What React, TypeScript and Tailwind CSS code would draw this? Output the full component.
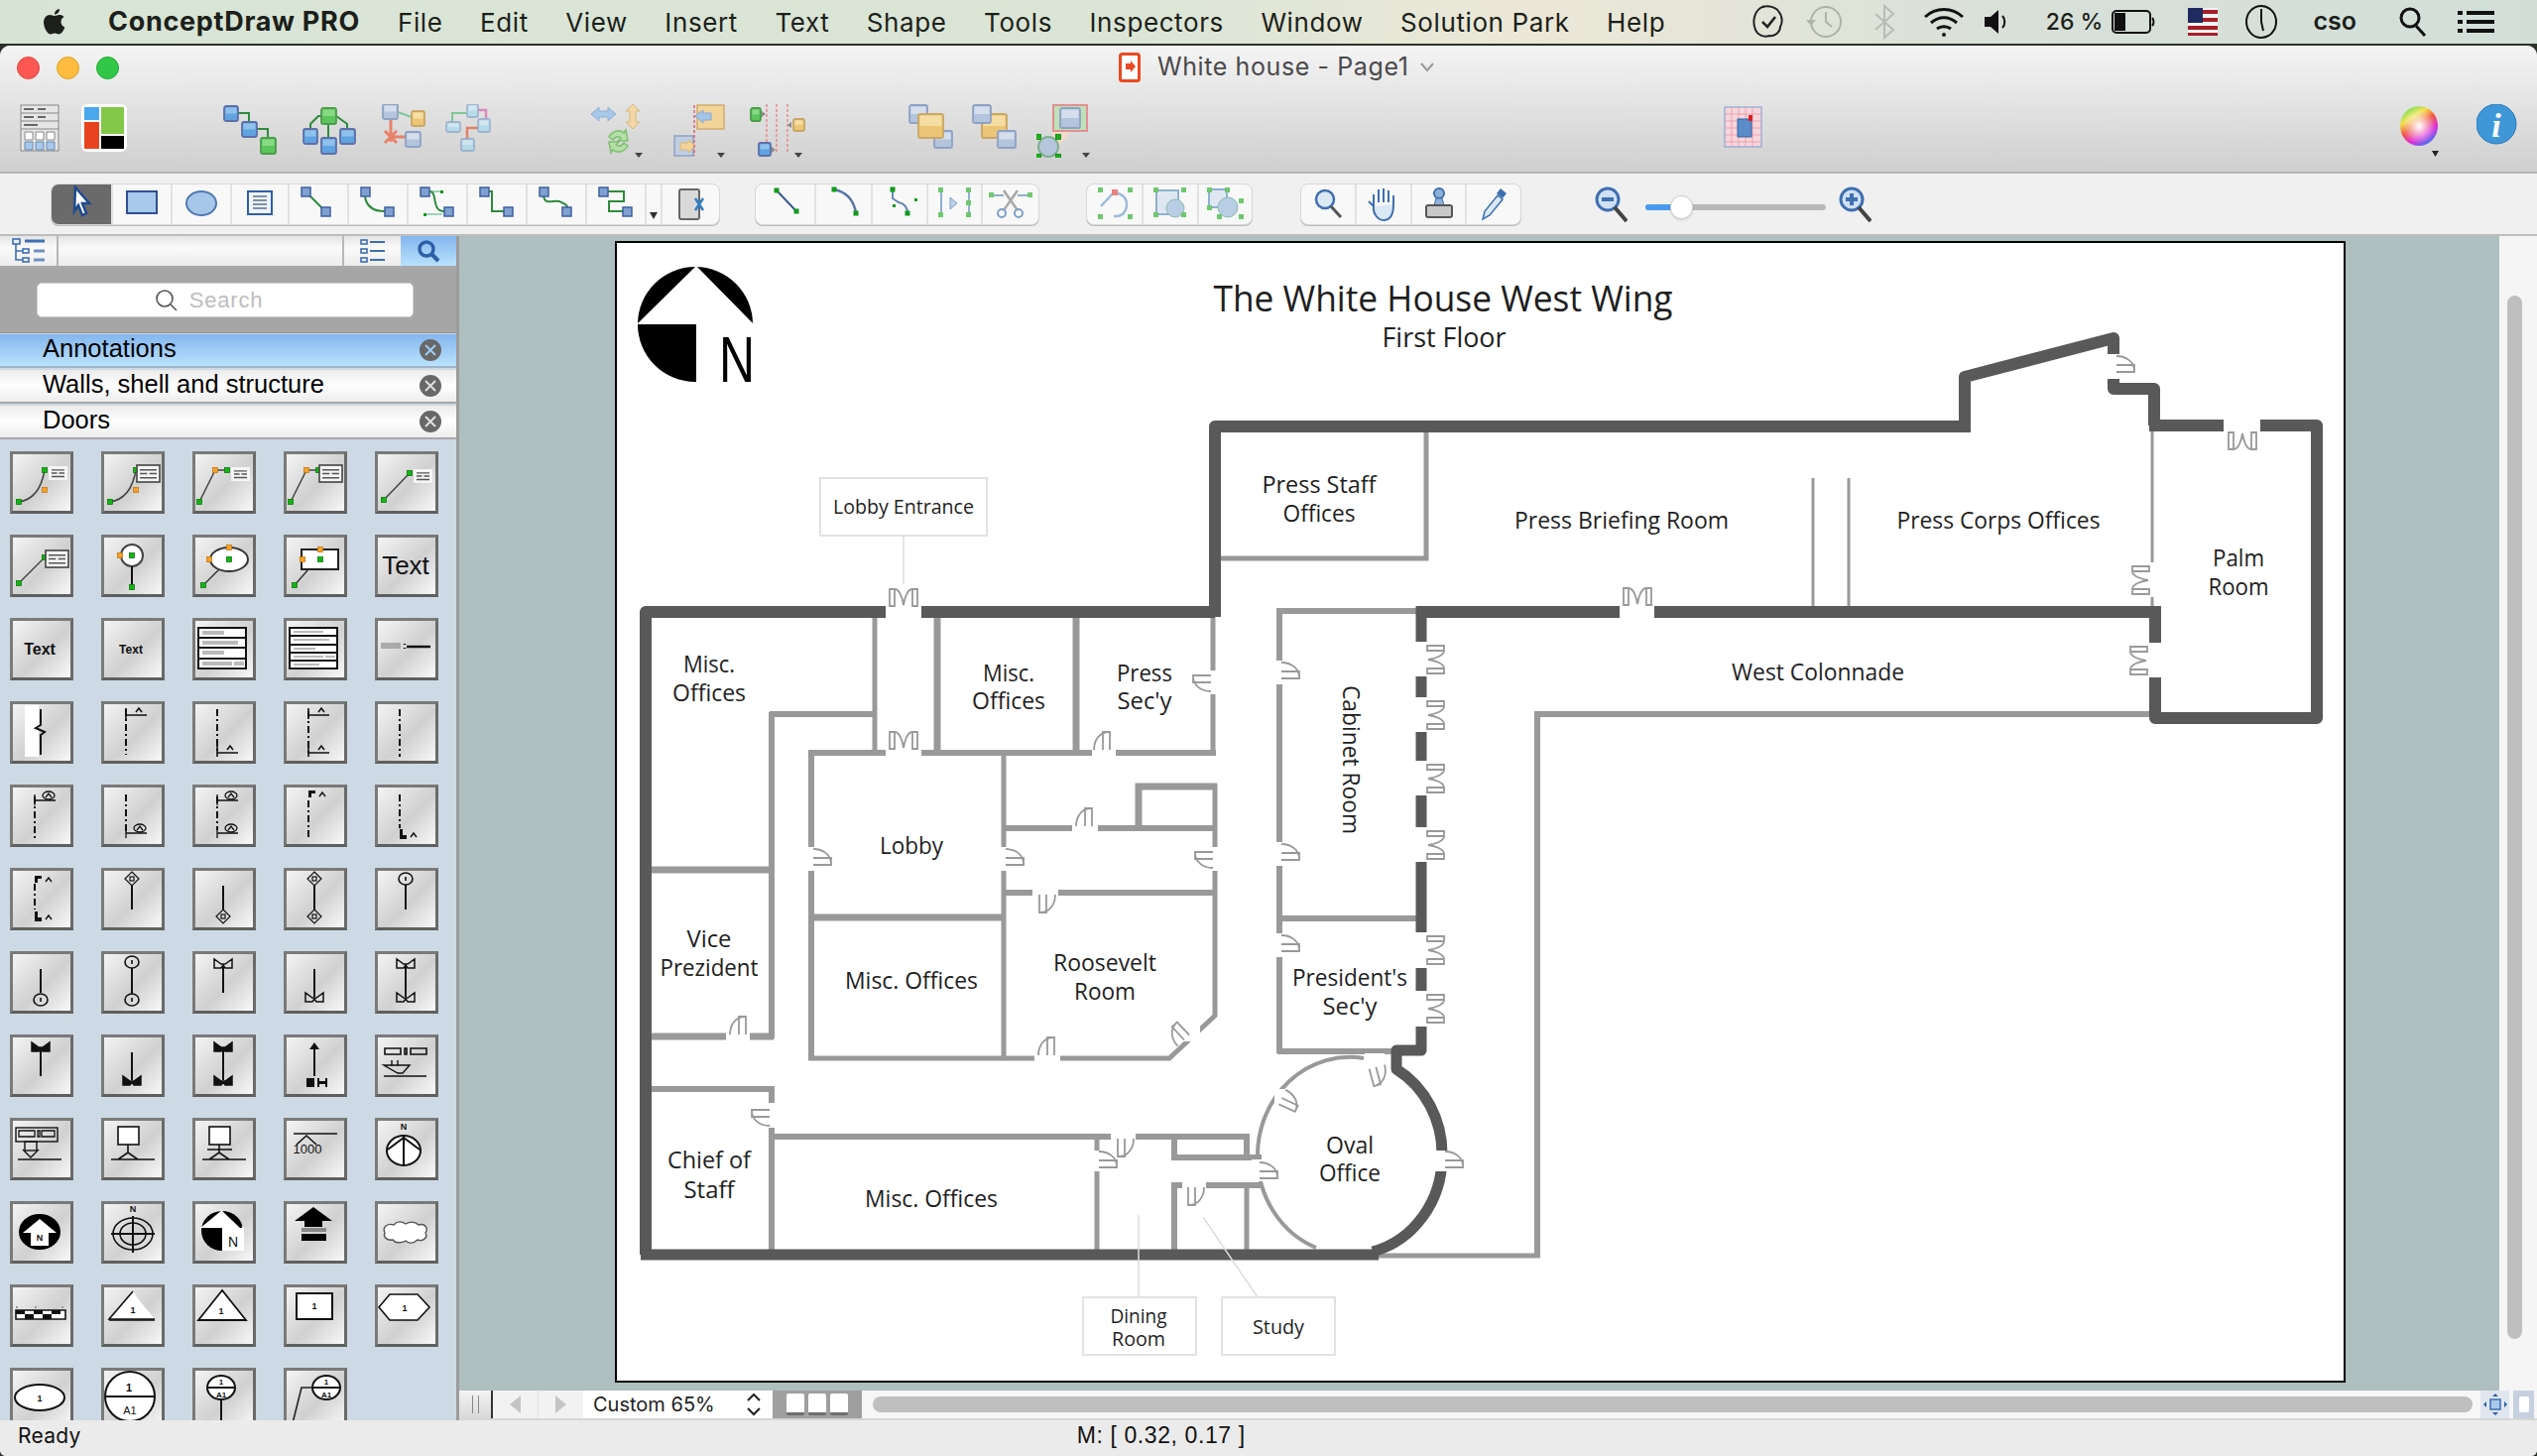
import React from "react";

const LB = "#999999";
const DK = "#595959";

function G({ x, y }: { x: number; y: number }) {
  return <rect x={x - 2.5} y={y - 2.5} width={5} height={5} fill="#16b316" stroke="#0b7d0b" strokeWidth={0.8} />;
}
function O({ x, y }: { x: number; y: number }) {
  return <rect x={x - 2.5} y={y - 2.5} width={5} height={5} fill="#f4a12a" stroke="#c77a10" strokeWidth={0.8} />;
}
function TL({ x, y, w, h, box }: { x: number; y: number; w: number; h: number; box?: boolean }) {
  return (
    <g>
      <rect x={x} y={y} width={w} height={h} fill="#f5f5f5" stroke={box ? "#444" : "none"} strokeWidth={box ? 1.6 : 0} />
      <path d={`M${x + 3} ${y + h * 0.28}H${x + w - 3}M${x + 3} ${y + h * 0.5}H${x + w * 0.45}M${x + w * 0.55} ${y + h * 0.5}H${x + w - 3}M${x + 3} ${y + h * 0.75}H${x + w - 3}`} stroke="#555" strokeWidth={1.4} />
    </g>
  );
}
const DashV = ({ x, y1, y2 }: { x: number; y1: number; y2: number }) => <path d={`M${x} ${y1}V${y2}`} stroke="#111" strokeWidth={2} strokeDasharray="7 3 2 3" fill="none" />;
const TickT = ({ x, y }: { x: number; y: number }) => (
  <g stroke="#111" strokeWidth={1.6} fill="none">
    <path d={`M${x} ${y - 7}V${y + 4}M${x} ${y}H${x + 21}`} />
    <path d={`M${x + 10} ${y - 3}l3 -4l3 4`} />
  </g>
);
const Circ = ({ x, y }: { x: number; y: number }) => (
  <g stroke="#111" strokeWidth={1.3} fill="none">
    <path d={`M${x} ${y - 6}V${y + 5}M${x} ${y}H${x + 21}`} />
    <ellipse cx={x + 14} cy={y - 5} rx={6} ry={4} />
    <path d={`M${x + 11} ${y - 3}l3 -4l3 4`} />
  </g>
);
const FL = ({ x, y }: { x: number; y: number }) => (
  <g>
    <path d={`M${x} ${y}h7v3h-4v4h-3z`} fill="#111" />
    <path d={`M${x + 11} ${y + 6}l3 -4l3 4`} stroke="#111" strokeWidth={1.4} fill="none" />
  </g>
);
const Dm = ({ x, y }: { x: number; y: number }) => (
  <g stroke="#111" strokeWidth={1.2} fill="none">
    <path d={`M${x} ${y - 7}l7 7l-7 7l-7 -7z`} />
    <rect x={x - 2} y={y - 2} width={4} height={4} />
  </g>
);
const Ci = ({ x, y }: { x: number; y: number }) => (
  <g stroke="#111" strokeWidth={1.6} fill="none">
    <ellipse cx={x} cy={y} rx={7} ry={6} />
    <path d={`M${x} ${y - 2}v4`} />
  </g>
);
const Wg = ({ x, y, f }: { x: number; y: number; f?: boolean }) => (
  <path d={`M${x - 9} ${y - 5}v9h7l2 -3l2 3h7v-9l-7 5h-4z`} fill={f ? "#111" : "none"} stroke="#111" strokeWidth={1.5} />
);
const Ln = ({ d, w = 2 }: { d: string; w?: number }) => <path d={d} stroke="#111" strokeWidth={w} fill="none" />;
const Tx = ({ x, y, s, t, b }: { x: number; y: number; s: number; t: string; b?: boolean }) => (
  <text x={x} y={y} fontSize={s} fontWeight={b ? 700 : 400} textAnchor="middle" fill="#111" className="font-['Liberation_Sans',sans-serif]">{t}</text>
);

const lib: React.ReactNode[] = [
  <g><path d="M9 51Q30 48 35 19" stroke="#444" strokeWidth={1.5} fill="none" /><G x={9} y={51} /><G x={35} y={19} /><O x={35} y={39} /><TL x={39} y={15} w={19} h={14} /></g>,
  <g><path d="M9 51Q30 48 35 19" stroke="#444" strokeWidth={1.5} fill="none" /><G x={9} y={51} /><G x={35} y={19} /><O x={35} y={39} /><TL x={36} y={14} w={23} h={17} box /></g>,
  <g><path d="M7 51L23 19H35" stroke="#444" strokeWidth={1.5} fill="none" /><G x={7} y={51} /><O x={23} y={19} /><G x={35} y={19} /><TL x={39} y={16} w={19} h={14} /></g>,
  <g><path d="M7 51L23 19H35" stroke="#444" strokeWidth={1.5} fill="none" /><G x={7} y={51} /><O x={23} y={19} /><G x={35} y={19} /><TL x={36} y={14} w={23} h={17} box /></g>,
  <g><path d="M9 49L35 22" stroke="#444" strokeWidth={1.5} /><G x={9} y={49} /><G x={35} y={22} /><TL x={39} y={18} w={19} h={14} /></g>,
  <g><path d="M9 49L35 23" stroke="#444" strokeWidth={1.5} /><G x={9} y={49} /><G x={35} y={23} /><TL x={36} y={16} w={23} h={17} box /></g>,
  <g><circle cx={31} cy={21} r={11} fill="#fff" stroke="#444" strokeWidth={2} /><Ln d="M31 32V53" /><G x={31} y={21} /><G x={31} y={53} /><O x={19} y={21} /></g>,
  <g><ellipse cx={37} cy={25} rx={19} ry={12} fill="#fff" stroke="#333" strokeWidth={2} /><path d="M11 51L27 35" stroke="#333" strokeWidth={1.5} /><G x={37} y={25} /><O x={17} y={25} /><O x={37} y={13} /><G x={11} y={51} /></g>,
  <g><rect x={18} y={15} width={37} height={20} fill="#fff" stroke="#222" strokeWidth={2} /><path d="M11 51L25 35" stroke="#333" strokeWidth={1.5} /><G x={37} y={25} /><O x={19} y={25} /><O x={37} y={15} /><G x={11} y={51} /></g>,
  <Tx x={31} y={40} s={26} t="Text" />,
  <Tx x={30} y={37} s={16} t="Text" b />,
  <Tx x={30} y={36} s={12} t="Text" b />,
  <g><rect x={6} y={10} width={48} height={41} fill="#fff" stroke="#111" strokeWidth={2} /><Ln d="M6 20H54M6 30H54M6 41H54" /><path d="M10 13h22v4h-22zM10 23h36v4h-36zM10 33h22v4h-22zM10 44h30v4h-30zM42 44h10v4h-10z" fill="#bbb" /></g>,
  <g><rect x={6} y={10} width={48} height={41} fill="#fff" stroke="#111" strokeWidth={2} /><Ln d="M6 18H54M6 27H54M6 35H54M6 43H54" /><path d="M10 13h30v2h-30zM10 21h36v2h-36zM10 30h22v2h-22zM10 38h30v2h-30zM42 38h10v2h-10zM10 46h26v2h-26z" fill="#bbb" /></g>,
  <g><rect x={6} y={25} width={20} height={6} fill="#aaa" /><Ln d="M30 26v1M30 30v1M32 29H56" w={2.4} /></g>,
  <g><rect x={15} y={4} width={14} height={52} fill="#fff" /><Ln d="M31 8V24l-5 3l9 4l-4 3V54" /></g>,
  <g><DashV x={25} y1={8} y2={54} /><TickT x={25} y={14} /></g>,
  <g><DashV x={25} y1={8} y2={52} /><TickT x={25} y={52} /></g>,
  <g><DashV x={25} y1={10} y2={52} /><TickT x={25} y={14} /><TickT x={25} y={52} /></g>,
  <DashV x={25} y1={8} y2={56} />,
  <g><DashV x={25} y1={12} y2={54} /><Circ x={25} y={16} /></g>,
  <g><DashV x={25} y1={10} y2={48} /><Circ x={25} y={49} /></g>,
  <g><DashV x={25} y1={12} y2={46} /><Circ x={25} y={16} /><Circ x={25} y={49} /></g>,
  <g><DashV x={25} y1={16} y2={54} /><FL x={25} y={6} /></g>,
  <g><DashV x={25} y1={10} y2={44} /><path d="M25 45h3v6h4v4h-7z" fill="#111" /><path d="M36 53l3 -4l3 4" stroke="#111" strokeWidth={1.4} fill="none" /></g>,
  <g><DashV x={25} y1={16} y2={42} /><FL x={25} y={8} /><path d="M25 44h3v6h4v4h-7z" fill="#111" /><path d="M36 52l3 -4l3 4" stroke="#111" strokeWidth={1.4} fill="none" /></g>,
  <g><Dm x={31} y={11} /><Ln d="M31 18V42" /></g>,
  <g><Ln d="M31 18V42" /><Dm x={31} y={49} /></g>,
  <g><Dm x={31} y={11} /><Ln d="M31 18V42" /><Dm x={31} y={49} /></g>,
  <g><Ci x={31} y={11} /><Ln d="M31 17V42" /></g>,
  <g><Ln d="M31 18V42" /><Ci x={31} y={49} /></g>,
  <g><Ci x={31} y={11} /><Ln d="M31 17V43" /><Ci x={31} y={49} /></g>,
  <g><Wg x={31} y={13} /><Ln d="M31 14V42" /></g>,
  <g><Ln d="M31 18V46" /><Wg x={31} y={47} /></g>,
  <g><Wg x={31} y={13} /><Ln d="M31 14V46" /><Wg x={31} y={47} /></g>,
  <g><Wg x={31} y={13} f /><Ln d="M31 14V42" /></g>,
  <g><Ln d="M31 18V46" /><Wg x={31} y={47} f /></g>,
  <g><Wg x={31} y={13} f /><Ln d="M31 14V46" /><Wg x={31} y={47} f /></g>,
  <g><path d="M31 8l5 7h-10z" fill="#111" /><Ln d="M31 14V42" /><path d="M23 44h8v9h-8zM34 44h2v9h-2zM42 44h2v9h-2zM36 47h6v3h-6z" fill="#111" /></g>,
  <g><path d="M10 14h16v6h-16zM30 14h2v6h-2zM36 14h16v6h-16z" fill="none" stroke="#111" strokeWidth={1.6} /><Ln d="M17 26v6M23 26v6M9 31h26l-7 8l-5 0zM9 42H52" w={1.4} /></g>,
  <g><rect x={6} y={10} width={42} height={14} fill="none" stroke="#111" strokeWidth={1.4} /><path d="M9 13h16v6h-16zM28 13h2v6h-2zM32 13h13v6h-13z" fill="none" stroke="#111" strokeWidth={1.3} /><rect x={15} y={24} width={12} height={9} fill="none" stroke="#111" strokeWidth={1.4} /><Ln d="M8 42h44M13 32l8 8l8 -8" w={1.4} /></g>,
  <g><rect x={17} y={9} width={21} height={18} fill="#fff" stroke="#111" strokeWidth={1.6} /><Ln d="M27 27v8M10 42H54M17 42l10 -7l10 7" w={1.6} /></g>,
  <g><rect x={17} y={9} width={21} height={18} fill="#fff" stroke="#111" strokeWidth={1.6} /><Ln d="M27 27v8M15 32H40M10 42H54M17 42l10 -7l10 7" w={1.6} /></g>,
  <g><Ln d="M10 16H54M13 27l10 -9l10 9" w={1.6} /><Tx x={24} y={36} s={13} t="1000" /></g>,
  <g><ellipse cx={29} cy={33} rx={17} ry={15} fill="#fff" stroke="#111" strokeWidth={2} /><Ln d="M29 18V48M13 32l16 -12l16 12" w={2} /><Tx x={29} y={12} s={9} t="N" b /></g>,
  <g><ellipse cx={30} cy={31} rx={21} ry={18} fill="#000" /><path d="M30 18l17 14h-8v13h-18v-13h-8z" fill="#fff" /><Tx x={30} y={40} s={9} t="N" b /></g>,
  <g><ellipse cx={32} cy={33} rx={20} ry={16} fill="none" stroke="#111" strokeWidth={1.6} /><ellipse cx={32} cy={33} rx={13} ry={11} fill="none" stroke="#111" strokeWidth={1.6} /><Ln d="M32 15V52M10 33H54" w={2} /><Tx x={32} y={11} s={9} t="N" b /></g>,
  <g><ellipse cx={30} cy={30} rx={21} ry={20} fill="#000" /><path d="M30 9L8 27H30V50H52V27z" fill="#fff" /><path d="M30 10l18 17l2 0a21 20 0 0 0 -20 -17z" fill="#000" /><Tx x={41} y={46} s={14} t="N" /></g>,
  <g><path d="M30 6l19 14h-10v6h-18v-6h-10z" fill="#000" /><rect x={18} y={27} width={25} height={4} fill="#888" /><rect x={18} y={33} width={25} height={7} fill="#000" /></g>,
  <path d="M10 32c-3-6 3-10 9-8c3-4 8-4 12-1c5-3 10-2 13 1c7-2 10 4 7 8c3 5-3 9-8 7c-4 4-9 4-12 1c-5 3-11 2-13-1c-6 1-10-3-8-7z" fill="#fff" stroke="#555" strokeWidth={1.4} />,
  <g><path d="M6 26h50v9h-50z" fill="#fff" stroke="#111" strokeWidth={1.6} /><path d="M6 26h9v4h-9zM24 26h9v4h-9zM42 26h9v4h-9zM15 30h9v5h-9zM33 30h9v5h-9z" fill="#111" /><path d="M6 22h2v2h-2zM25 22h2v2h-2zM52 22h2v2h-2z" fill="#999" /></g>,
  <g><path d="M32 7L8 35H54L36 13z" fill="#fff" /><Ln d="M32 7L8 35H54M32 7" w={1.6} /><Tx x={32} y={29} s={9} t="1" b /><Ln d="M8 36H54" w={1.6} /></g>,
  <g><path d="M30 6L6 36H54z" fill="#fff" stroke="#111" strokeWidth={1.8} /><Tx x={29} y={30} s={9} t="1" b /></g>,
  <g><rect x={13} y={9} width={36} height={26} fill="#fff" stroke="#111" strokeWidth={2} /><Tx x={31} y={25} s={9} t="1" b /></g>,
  <g><path d="M4 23L15 10H43L55 23L43 36H15z" fill="#fff" stroke="#111" strokeWidth={1.6} /><Tx x={30} y={27} s={9} t="1" b /></g>,
  <g><ellipse cx={30} cy={30} rx={25} ry={13} fill="#fff" stroke="#111" strokeWidth={2} /><Tx x={30} y={34} s={9} t="1" b /></g>,
  <g><ellipse cx={29} cy={29} rx={25} ry={25} fill="#fff" stroke="#111" strokeWidth={2} /><Ln d="M4 29H54" /><Tx x={28} y={24} s={11} t="1" b /><Tx x={29} y={47} s={11} t="A1" /></g>,
  <g><ellipse cx={29} cy={20} rx={14} ry={12} fill="#fff" stroke="#111" strokeWidth={2} /><Ln d="M15 20H43M29 32V60" /><Tx x={29} y={17} s={8} t="1" b /><Tx x={29} y={30} s={8} t="A1" b /></g>,
  <g><ellipse cx={43} cy={20} rx={14} ry={12} fill="#fff" stroke="#111" strokeWidth={2} /><Ln d="M29 20H57" /><path d="M8 60L18 20H29" stroke="#222" strokeWidth={1.6} fill="none" /><Tx x={43} y={17} s={8} t="1" b /><Tx x={43} y={30} s={8} t="A1" b /></g>,
];

type N = { x: number; y: number; w: number; h: number; c?: "b" | "g" | "t" | "r" | "l" | "p" };
function Nd({ x, y, w, h, c = "b" }: N) {
  const m = { b: ["#5fa3e0", "#5e6fa8", "#9cc8ee"], g: ["#5cc45c", "#4c9c4c", "#93de8f"], t: ["#ecc576", "#c9a765", "#f8e2b0"], r: ["#ee9d86", "#d9765c", "#f8c4b4"], l: ["#b4c4dc", "#8ea2c4", "#dde5f0"], p: ["#a9dcef", "#8fa8cc", "#d8eefa"] }[c];
  return (
    <g>
      <rect x={x} y={y} width={w} height={h} rx={2} fill={m[0]} stroke={m[1]} strokeWidth={1.8} />
      <rect x={x + 1.500} y={y + 1.500} width={w - 3} height={(h - 3) / 2} fill={m[2]} opacity={0.8} />
    </g>
  );
}
function TopIcon({ w, ml, children }: { w: number; ml: string; children: React.ReactNode }) {
  return (
    <svg width={w} height={54} viewBox={`0 0 ${w} 54`} className={`shrink-0 ${ml}`}>
      {children}
    </svg>
  );
}
const Arrowdown = ({ x, y }: { x: number; y: number }) => <path d={`M${x} ${y}h8l-4 5z`} fill="#444" />;

function Cell({ w, dark, last, children }: { w: string; dark?: boolean; last?: boolean; children?: React.ReactNode }) {
  return (
    <div className={`${w} h-full flex items-center justify-center ${dark ? "bg-[#6a6a6a]" : ""} ${last ? "" : "border-r-2 border-[#e2e2e2]"}`}>
      <svg width={50} height={40} viewBox="0 0 50 40">{children}</svg>
    </div>
  );
}
const Con = ({ d, c = "#2e8b3c" }: { d: string; c?: string }) => <path d={d} fill="none" stroke={c} strokeWidth={2} />;
const Sm = ({ x, y }: { x: number; y: number }) => <rect x={x} y={y} width={9} height={9} fill="#7fa0d0" stroke="#3f5f9f" strokeWidth={1.5} />;
const Gh = ({ x, y }: { x: number; y: number }) => <rect x={x} y={y} width={5} height={5} fill="#6fc76f" />;
const GD = ({ x, y }: { x: number; y: number }) => <rect x={x - 2.500} y={y - 2.500} width={5} height={5} fill="#0f9a1c" />;

function Door({ x, y, r = 0 }: { x: number; y: number; r?: number }) {
  return (
    <g transform={`translate(${x} ${y}) rotate(${r})`} stroke={LB} strokeWidth={1.8} fill="none">
      <path d="M2 0C2 -10 8 -18 17 -18M11 0V-18H18V0" />
    </g>
  );
}
function DDoor({ x, y, r = 0 }: { x: number; y: number; r?: number }) {
  return (
    <g transform={`translate(${x} ${y}) rotate(${r})`} stroke={LB} strokeWidth={1.8} fill="none">
      <path d="M4 -2V-19H9V-2ZM27 -2V-19H32V-2ZM9 -19C14 -19 17 -10 18 -3C19 -10 22 -19 27 -19" />
    </g>
  );
}
function L({ x, y, w, s = 24, t, r }: { x: number; y: number; w: number; s?: number; t: string; r?: boolean }) {
  return (
    <text
      x={x}
      y={y - 2}
      fontSize={s}
      textAnchor="middle"
      dominantBaseline="central"
      textLength={w}
      lengthAdjust="spacingAndGlyphs"
      fill="#1e1e1e"
      transform={r ? `rotate(90 ${x} ${y})` : undefined}
      className="font-['Open_Sans',sans-serif]"
    >
      {t}
    </text>
  );
}

const thin: [string, number][] = [
  ["M882 616V760", 5],
  ["M776 720H884", 6],
  ["M778 718V1047", 6],
  ["M656 1045H780", 7],
  ["M945 620V760", 7],
  ["M1085 620V760", 7],
  ["M1223 620V760", 5],
  ["M815 759H1226", 6],
  ["M818 757V1068", 6],
  ["M818 925H1012", 7],
  ["M1012 757V1068", 5],
  ["M1012 835H1227", 6],
  ["M1148 835V793H1227", 7],
  ["M1225 790V1024L1179 1067H815", 5],
  ["M1012 900H1227", 6],
  ["M656 877H780", 7],
  ["M1290 1062V616H1430", 6],
  ["M1290 926H1428", 6],
  ["M1288 1060H1404", 6],
  ["M656 1098H780", 6],
  ["M778 1095V1262", 6],
  ["M778 1146H1257V1167", 6],
  ["M1106 1146V1262", 5],
  ["M1184 1146V1167H1272", 6],
  ["M1184 1262V1195H1272", 6],
  ["M1257 1195V1262", 5],
  ["M1550 1268V720H2170", 6],
  ["M1384 1266H1553", 5],
  ["M1231 563H1438V436", 5],
  ["M1828 482V612", 3],
  ["M1864 482V612", 3],
  ["M2170 435V612", 3],
  ["M1375 1067A93 99 0 0 0 1268 1165A93 99 0 0 0 1327 1258", 4],
];
const dark: string[] = [
  "M651 1265V617H1225",
  "M1225 622V430H1982",
  "M1981 436V380L2131 341V357",
  "M2131 380V392H2172V429H2167",
  "M2167 429H2336V724H2173V611",
  "M2177 617H1428",
  "M1433 611V802",
  "M1433 802V1059H1408V1078A93 99 0 0 1 1454 1165A93 99 0 0 1 1384 1262",
  "M1390 1265H646",
];
const gaps: [number, number, number, number][] = [
  [893, 605, 36, 24], [893, 753, 36, 12], [1101, 753, 24, 12], [1218, 676, 10, 24], [1285, 666, 10, 24], [813, 854, 10, 24], [1007, 854, 10, 24], [1081, 830, 26, 10], [1220, 854, 10, 24], [1041, 895, 26, 10], [1043, 1061, 26, 10], [1190, 1030, 20, 20],
  [1285, 849, 10, 24], [1285, 941, 10, 24], [732, 1040, 24, 10], [773, 1112, 10, 25], [1120, 1141, 25, 10], [1101, 1160, 10, 21], [1192, 1190, 24, 10], [1262, 1169, 14, 22], [1285, 1098, 14, 24], [1376, 1062, 20, 14], [1445, 1160, 16, 21], [2123, 357, 16, 25],
  [1633, 605, 35, 24], [2242, 418, 37, 22], [2165, 567, 10, 35], [2164, 648, 16, 35], [1425, 647, 16, 35], [1425, 703, 16, 35], [1425, 767, 16, 35], [1425, 834, 16, 35], [1425, 940, 16, 36], [1425, 999, 16, 36],
];

function FloorPlan() {
  return (
    <svg width={1741} height={1147} viewBox="622 245 1741 1147" className="block">
      <ellipse cx={701} cy={327} rx={58} ry={58} fill="#000" />
      <path d="M702 268L642 327H702V388H762V329z" fill="#fff" />
      <text x={743} y={385} fontSize={64} textAnchor="middle" className="font-['Liberation_Sans',sans-serif]" fill="#000" textLength={36} lengthAdjust="spacingAndGlyphs">N</text>
      <L x={1455} y={301} w={463} s={37} t="The White House West Wing" />
      <L x={1456} y={341} w={125} s={27} t="First Floor" />
      {thin.map(([d, w], i) => (
        <path key={i} d={d} fill="none" stroke={LB} strokeWidth={w} />
      ))}
      {dark.map((d, i) => (
        <path key={i} d={d} fill="none" stroke={DK} strokeWidth={i > 4 && i !== 5 ? 11 : 12} strokeLinejoin="round" />
      ))}
      {gaps.map(([x, y, w, h], i) => (
        <rect key={i} x={x} y={y} width={w} height={h} fill="#fff" />
      ))}
      <Door x={1101} y={756} />
      <Door x={1221} y={699} r={-90} />
      <Door x={1292} y={666} r={90} />
      <Door x={820} y={854} r={90} />
      <Door x={1014} y={854} r={90} />
      <Door x={1083} y={833} />
      <Door x={1223} y={877} r={-90} />
      <Door x={1066} y={902} r={180} />
      <Door x={1045} y={1064} />
      <Door x={1186} y={1056} r={-43} />
      <Door x={1292} y={849} r={90} />
      <Door x={1292} y={941} r={90} />
      <Door x={734} y={1043} />
      <Door x={776} y={1137} r={-90} />
      <Door x={1145} y={1148} r={180} />
      <Door x={1108} y={1159} r={90} />
      <Door x={1216} y={1197} r={180} />
      <Door x={1270} y={1170} r={90} />
      <Door x={1297} y={1097} r={115} />
      <Door x={1398} y={1073} r={165} />
      <Door x={1457} y={1159} r={90} />
      <Door x={2134} y={357} r={90} />
      <DDoor x={893} y={613} />
      <DDoor x={893} y={757} />
      <DDoor x={1633} y={612} />
      <DDoor x={2279} y={434} r={180} />
      <DDoor x={2169} y={603} r={-90} />
      <DDoor x={2167} y={684} r={-90} />
      {[647, 703, 767, 834, 940, 999].map((y) => (
        <DDoor key={y} x={1437} y={y} r={90} />
      ))}
      <rect x={827} y={482} width={168} height={58} fill="#fff" stroke="#e2e2e2" strokeWidth={2} />
      <path d="M911 540V589M1148 1225V1308M1213 1227L1268 1308" stroke="#dddddd" strokeWidth={1.5} fill="none" />
      <rect x={1092} y={1308} width={114} height={58} fill="#fff" stroke="#e2e2e2" strokeWidth={2} />
      <rect x={1232} y={1308} width={114} height={58} fill="#fff" stroke="#e2e2e2" strokeWidth={2} />
      <L x={911} y={512} w={142} s={20} t="Lobby Entrance" />
      <L x={1148} y={1328} w={57} s={20} t="Dining" />
      <L x={1148} y={1351} w={54} s={20} t="Room" />
      <L x={1289} y={1339} w={52} s={20} t="Study" />
      <L x={1330} y={489} w={115} t="Press Staff" />
      <L x={1330} y={518} w={73} t="Offices" />
      <L x={715} y={670} w={52} t="Misc." />
      <L x={715} y={699} w={74} t="Offices" />
      <L x={1017} y={679} w={52} t="Misc." />
      <L x={1017} y={707} w={74} t="Offices" />
      <L x={1154} y={679} w={56} t="Press" />
      <L x={1154} y={707} w={55} t="Sec'y" />
      <L x={1361} y={766} w={150} t="Cabinet Room" r />
      <L x={1635} y={525} w={216} t="Press Briefing Room" />
      <L x={2015} y={525} w={205} t="Press Corps Offices" />
      <L x={2257} y={563} w={52} t="Palm" />
      <L x={2257} y={592} w={61} t="Room" />
      <L x={1833} y={678} w={174} t="West Colonnade" />
      <L x={919} y={853} w={64} t="Lobby" />
      <L x={715} y={947} w={45} t="Vice" />
      <L x={715} y={976} w={99} t="Prezident" />
      <L x={919} y={989} w={134} t="Misc. Offices" />
      <L x={1114} y={971} w={104} t="Roosevelt" />
      <L x={1114} y={1000} w={62} t="Room" />
      <L x={1361} y={986} w={116} t="President's" />
      <L x={1361} y={1015} w={55} t="Sec'y" />
      <L x={1361} y={1155} w={48} t="Oval" />
      <L x={1361} y={1183} w={62} t="Office" />
      <L x={715} y={1170} w={84} t="Chief of" />
      <L x={715} y={1200} w={51} t="Staff" />
      <L x={939} y={1209} w={134} t="Misc. Offices" />
    </svg>
  );
}

function MenuBar() {
  return (
    <div className="h-[46px] shrink-0 flex items-center bg-[linear-gradient(90deg,#d8e4d6,#dbe5d6_45%,#ece8d8_60%,#d8e0d8_80%,#d2dfd9)] border-b-2 border-[#2b3328] text-[#1c1f1a] font-['Inter',sans-serif] text-[26px]">
      <svg width={26} height={26} viewBox="0 0 26 26" className="ml-[42px]">
        <path d="M18 6c-2 0-3.300 1-5 1s-2.800-1-4.800-1C5 6 2 9 2 13.500 2 19 6 25.500 9 25.500c1.700 0 2.300-1 4.200-1s2.400 1 4.100 1c2.700 0 5-4 6-7-2.500-1-3.800-3-3.800-5.500 0-2.300 1.200-4 3-5-1.200-1.500-2.900-2-4.500-2z M13 5.500c0-3 2.200-5.200 5-5.500 .2 3-2.200 5.500-5 5.500z" fill="#1c1f1a" />
      </svg>
      <span className="ml-[41px] font-bold text-[27px] tracking-[0.7px]">ConceptDraw PRO</span>
      <div className="ml-[38px] flex gap-[37.5px]">
        {["File", "Edit", "View", "Insert", "Text", "Shape", "Tools", "Inspectors", "Window", "Solution Park", "Help"].map((m) => (
          <span key={m} className="tracking-[0.6px]">{m}</span>
        ))}
      </div>
      <div className="ml-auto flex items-center mr-[43px]">
        <svg width={32} height={34} viewBox="0 0 32 34" className="mr-[21px]" fill="none" stroke="#222" strokeWidth={2}>
          <path d="M8 3c5-3 14-2 18 3c4 5 5 10 2 16c0 5-5 10-11 9c-6 2-12-1-14-6C0 18 1 8 8 3z" />
          <path d="M10 17l5 5l8-10" strokeWidth={2.6} />
        </svg>
        <svg width={38} height={36} viewBox="0 0 38 36" className="mr-[31px]" fill="none" stroke="#aeb3a8" strokeWidth={2}>
          <circle cx={21} cy={18} r={15} />
          <path d="M21 8v10l6 5" />
          <path d="M1 16l5 6l5-6z" fill="#aeb3a8" stroke="none" />
        </svg>
        <svg width={22} height={36} viewBox="0 0 22 36" className="mr-[28px]" fill="none" stroke="#b8bcb2" strokeWidth={2}>
          <path d="M2 10l18 16l-9 8V2l9 8L2 26" />
        </svg>
        <svg width={42} height={32} viewBox="0 0 42 32" className="mr-[19px]" fill="none" stroke="#111" strokeWidth={3}>
          <path d="M2 11c11-10 27-10 38 0M8 17c8-7 18-7 26 0M14 23c4-3 10-3 14 0" />
          <circle cx={21} cy={29} r={2} fill="#111" stroke="none" />
        </svg>
        <svg width={28} height={26} viewBox="0 0 28 26" className="mr-[35px]">
          <path d="M1 8h6l8-7v24l-8-7H1z" fill="#111" />
          <path d="M19 7c3 3 3 9 0 12" fill="none" stroke="#111" strokeWidth={2} />
        </svg>
        <span className="text-[23px] font-medium mr-[9px]">26 %</span>
        <svg width={44} height={24} viewBox="0 0 44 24" className="mr-[33px]">
          <rect x={1} y={1} width={38} height={22} rx={4} fill="none" stroke="#111" strokeWidth={2} />
          <rect x={3} y={3} width={11} height={18} fill="#111" />
          <path d="M41 8c2 2 2 6 0 8" fill="none" stroke="#111" strokeWidth={2} />
        </svg>
        <svg width={30} height={28} viewBox="0 0 30 28" className="mr-[27px]">
          <rect width={30} height={28} fill="#f3f3f3" />
          <path d="M0 2h30v4H0zM0 10h30v4H0zM0 18h30v4H0zM0 25h30v3H0z" fill="#a51f2a" />
          <rect width={15} height={15} fill="#1f2a60" />
        </svg>
        <svg width={34} height={36} viewBox="0 0 34 36" className="mr-[35px]" fill="none" stroke="#111" strokeWidth={2}>
          <ellipse cx={17} cy={18} rx={15} ry={16} />
          <path d="M17 5v13l2 9" />
        </svg>
        <span className="text-[25px] font-semibold mr-[43px]">cso</span>
        <svg width={28} height={32} viewBox="0 0 28 32" className="mr-[31px]" fill="none" stroke="#111" strokeWidth={3}>
          <circle cx={11} cy={12} r={9} />
          <path d="M17 20l9 10" />
        </svg>
        <svg width={37} height={26} viewBox="0 0 37 26" fill="#111">
          <path d="M0 2h5v4H0zM9 2h28v4H9zM0 11h5v4H0zM9 11h28v4H9zM0 20h5v4H0zM9 20h28v4H9z" />
        </svg>
      </div>
    </div>
  );
}

function TopToolbar() {
  return (
    <div className="h-[129px] shrink-0 bg-[linear-gradient(180deg,#f4f4f4,#ebebeb_25%,#cfcfcf)] border-b-2 border-[#b4b4b4] flex flex-col">
      <div className="h-[44px] flex items-center">
        <div className="flex gap-[17px] ml-[17px]">
          <div className="w-[23px] h-[23px] rounded-full bg-[#fc5753] border border-[#e0443e]" />
          <div className="w-[23px] h-[23px] rounded-full bg-[#fdbc40] border border-[#dea123]" />
          <div className="w-[23px] h-[23px] rounded-full bg-[#33c748] border border-[#1aab29]" />
        </div>
        <div className="ml-[1008px] flex items-center">
          <svg width={22} height={30} viewBox="0 0 22 30" className="mr-[17px]">
            <rect x={1.500} y={1.500} width={19} height={27} rx={2} fill="#fff" stroke="#ea4a22" strokeWidth={3} />
            <path d="M7 11h5v-3l5 6l-5 6v-3h-5z" fill="#ea4a22" />
          </svg>
          <span className="text-[25px] text-[#4a4a4a] font-['Inter',sans-serif] tracking-[0.6px] whitespace-nowrap">White house - Page1</span>
          <svg width={16} height={10} viewBox="0 0 16 10" className="ml-[10px]">
            <path d="M2 1l6 7l6-7" fill="none" stroke="#9a9a9a" strokeWidth={2} />
          </svg>
        </div>
      </div>
      <div className="flex mt-[15px]">
        <TopIcon w={40} ml="ml-[20px]">
          <rect x={1} y={1} width={38} height={46} fill="#e6e6e6" stroke="#888" />
          <path d="M1 9h38M1 17h38M1 25h38" stroke="#888" />
          <path d="M4 4h10v2h-10zM18 4h8v2h-8zM4 12h10v2h-10zM18 12h8v2h-8zM4 20h14v2h-14z" fill="#666" />
          <path d="M5 28h8v8h-8zM16 28h8v8h-8zM27 28h8v8h-8z" fill="#fff" stroke="#888" />
          <path d="M5 38h8v8h-8zM16 38h8v8h-8zM27 38h8v8h-8z" fill="#a8c8ec" stroke="#6a8ab0" />
        </TopIcon>
        <TopIcon w={46} ml="ml-[22px]">
          <rect x={0} y={0} width={46} height={48} rx={6} fill="#fff" />
          <rect x={3} y={3} width={15} height={13} fill="#4aa8ef" />
          <rect x={3} y={18} width={15} height={27} fill="#e8431f" />
          <rect x={20} y={3} width={23} height={27} fill="#84c84a" />
          <rect x={20} y={32} width={23} height={13} fill="#000" />
        </TopIcon>
        <TopIcon w={54} ml="ml-[97px]">
          <Con d="M15 9H26V18M34 25H45V34" />
          <Nd x={1} y={2} w={14} h={15} />
          <Nd x={19} y={18} w={15} h={15} />
          <Nd x={38} y={34} w={15} h={16} c="g" />
        </TopIcon>
        <TopIcon w={54} ml="ml-[26px]">
          <Con d="M26 20V34M26 12H16L8 20V25M34 12L45 20V25" />
          <Nd x={19} y={4} w={15} h={16} c="g" />
          <Nd x={1} y={25} w={14} h={15} />
          <Nd x={19} y={34} w={15} h={16} />
          <Nd x={38} y={25} w={15} h={15} />
        </TopIcon>
        <TopIcon w={46} ml="ml-[26px]">
          <path d="M16 8L30 13" stroke="#7fc89a" strokeWidth={2} />
          <path d="M9 15V38M9 33H24M3 27L15 39M15 27L3 39" stroke="#e8826a" strokeWidth={3} fill="none" />
          <Nd x={1} y={0} w={15} h={15} c="l" />
          <Nd x={30} y={7} w={13} h={15} c="t" />
          <Nd x={24} y={28} w={15} h={15} c="l" />
        </TopIcon>
        <TopIcon w={48} ml="ml-[18px]">
          <path d="M7 18V9H21" stroke="#7fc89a" strokeWidth={2} fill="none" />
          <path d="M33 6H41V15" stroke="#d98ac0" strokeWidth={2.5} fill="none" />
          <path d="M33 24H22V35" stroke="#e0806a" strokeWidth={2.5} fill="none" />
          <g opacity={0.75}>
            <Nd x={1} y={18} w={14} h={10} c="p" />
            <Nd x={22} y={0} w={11} h={13} c="p" />
            <Nd x={33} y={15} w={12} h={13} c="p" />
            <Nd x={16} y={35} w={13} h={12} c="p" />
          </g>
        </TopIcon>
        <TopIcon w={57} ml="ml-[98px]">
          <path d="M1 10l8-7v4h9v-4l8 7l-8 7v-4h-9v4z" fill="#a9c8e8" stroke="#8fb0d8" />
          <path d="M43 0l7 7h-4v11h4l-7 7l-7-7h4v-11h-4z" fill="#f2d8a4" stroke="#d8b878" />
          <path d="M19 33c3-6 11-8 15-4l2-3l2 11h-10l3-3c-3-2-6-1-8 2zM38 42c-3 6-11 8-15 4l-2 3l-2-11h10l-3 3c3 2 6 1 8-2z" fill="#b4dfa8" stroke="#7fc070" strokeWidth={1.500} />
          <Arrowdown x={45} y={49} />
        </TopIcon>
        <TopIcon w={56} ml="ml-[27px]">
          <rect x={24} y={1} width={27} height={24} fill="#f2d498" stroke="#d0ac70" strokeWidth={1.500} />
          <path d="M22 12l8-6v3h8v7h-8v3z" fill="#a4c4e8" stroke="#8aa8d0" />
          <rect x={1} y={32} width={19} height={20} fill="#c0cde2" stroke="#8ea2c4" strokeWidth={1.500} />
          <path d="M22 42l-7-6v3h-8v7h8v3z" fill="#f2d498" stroke="#d8b878" />
          <path d="M21 1V52" stroke="#e06070" strokeWidth={1.500} strokeDasharray="3 2" />
          <Arrowdown x={44} y={49} />
        </TopIcon>
        <TopIcon w={58} ml="ml-[20px]">
          <path d="M18 0V50M28 0V50M39 0V50" stroke="#e88a90" strokeWidth={1.500} strokeDasharray="3 2" />
          <Nd x={2} y={4} w={10} h={13} c="g" />
          <path d="M13 7l4 3l-4 3zM43 18l-4 3l4 3zM23 43l4 3l-4 3z" fill="#888" />
          <Nd x={45} y={15} w={11} h={12} c="t" />
          <Nd x={10} y={39} w={12} h={13} />
          <Arrowdown x={46} y={49} />
        </TopIcon>
        <TopIcon w={46} ml="ml-[103px]">
          <Nd x={1} y={1} w={18} h={18} c="l" />
          <Nd x={26} y={27} w={18} h={17} c="l" />
          <Nd x={10} y={10} w={25} h={24} c="t" />
        </TopIcon>
        <TopIcon w={48} ml="ml-[18px]">
          <Nd x={10} y={10} w={25} h={24} c="t" />
          <Nd x={1} y={1} w={18} h={18} c="l" />
          <Nd x={26} y={27} w={18} h={17} c="l" />
        </TopIcon>
        <TopIcon w={57} ml="ml-[17px]">
          <path d="M17 27L35 27L15 52z" fill="#f0dcc8" />
          <rect x={17} y={1} width={34} height={26} fill="#bfe0b8" stroke="#e09090" strokeWidth={2} />
          <Nd x={24} y={4} w={20} h={20} c="l" />
          <ellipse cx={12} cy={43} rx={10} ry={10} fill="#b6c6dd" stroke="#7fb08f" strokeWidth={2} />
          <G x={2} y={33} /><G x={22} y={33} /><G x={2} y={53} /><G x={22} y={53} />
          <Arrowdown x={46} y={49} />
        </TopIcon>
        <TopIcon w={39} ml="ml-[636px]">
          <rect x={1} y={3} width={37} height={40} fill="#f5d6dc" stroke="#7a9ccf" />
          <path d="M1 10H38M1 17H38M1 24H38M1 31H38M1 38H38M8 3V43M15 3V43M22 3V43M29 3V43" stroke="#e8909f" strokeWidth={0.7} />
          <rect x={14} y={15} width={14} height={18} fill="#5a8ccc" stroke="#35609f" />
          <rect x={25} y={11} width={4} height={6} fill="#d92020" />
        </TopIcon>
        <TopIcon w={41} ml="ml-[642px]">
          <defs>
            <radialGradient id="wh">
              <stop offset="0%" stopColor="#fff" />
              <stop offset="100%" stopColor="#fff" stopOpacity={0} />
            </radialGradient>
            <linearGradient id="wh2" x1="0" x2="0.6" y1="0" y2="1">
              <stop offset="0%" stopColor="#39e06b" />
              <stop offset="35%" stopColor="#f2e14a" />
              <stop offset="55%" stopColor="#f25a3a" />
              <stop offset="80%" stopColor="#e02bd8" />
              <stop offset="100%" stopColor="#5a6bf0" />
            </linearGradient>
          </defs>
          <ellipse cx={20} cy={22} rx={19} ry={20} fill="url(#wh2)" />
          <ellipse cx={20} cy={22} rx={17} ry={18} fill="url(#wh)" />
          <path d="M33 47h7l-3.500 6z" fill="#222" />
        </TopIcon>
        <TopIcon w={41} ml="ml-[37px]">
          <ellipse cx={20} cy={20} rx={20} ry={20} fill="#3f97d8" stroke="#2b7ab8" />
          <text x={20} y={33} textAnchor="middle" fontSize={34} fontWeight={700} fontStyle="italic" fill="#fff" className="font-['Liberation_Serif',serif]">i</text>
        </TopIcon>
      </div>
    </div>
  );
}

function SecondToolbar() {
  return (
    <div className="h-[63px] shrink-0 bg-[#f0f0f0] border-b-2 border-[#bdbdbd] flex items-center">
      <div className="ml-[51px] h-[42px] flex rounded-lg overflow-hidden bg-[#f8f8f8] border border-[#d8d8d8] shadow-[0_1px_0_#bbb]">
        <Cell w="w-[62px]" dark>
          <path d="M19 3L33 19H26L30 29L26 31L22 21L18 27z" fill="#fff" stroke="#1f4a90" strokeWidth={2.500} />
        </Cell>
        <Cell w="w-[60px]">
          <rect x={10} y={7} width={30} height={22} fill="#a8c8ec" stroke="#2f4f8f" strokeWidth={2} />
        </Cell>
        <Cell w="w-[60px]">
          <ellipse cx={25} cy={19} rx={15} ry={12} fill="#a6c6ea" stroke="#4f78b0" strokeWidth={2} />
        </Cell>
        <Cell w="w-[58px]">
          <rect x={13} y={7} width={24} height={23} fill="#eef3fa" stroke="#2f5fa9" strokeWidth={2} />
          <path d="M18 12H32M18 16H32M18 20H32M18 24H32" stroke="#8090ac" strokeWidth={2} />
        </Cell>
        <Cell w="w-[60px]">
          <Con d="M15 10L30 25" /><Sm x={8} y={3} /><Sm x={28} y={23} />
        </Cell>
        <Cell w="w-[60px]">
          <Con d="M12 12Q14 27 32 27" /><Sm x={8} y={3} /><Sm x={32} y={23} />
        </Cell>
        <Cell w="w-[60px]">
          <path d="M17 7H28M30 30H12" stroke="#7fc8a0" strokeWidth={1.500} />
          <Con d="M17 7C26 7 18 27 32 27" /><Sm x={8} y={3} /><Sm x={32} y={23} /><rect x={28} y={6} width={3} height={3} fill="#0f9a1c" /><rect x={11} y={29} width={3} height={3} fill="#0f9a1c" />
        </Cell>
        <Cell w="w-[60px]">
          <Con d="M17 7H20V27H32" /><Sm x={8} y={3} /><Sm x={32} y={23} />
        </Cell>
        <Cell w="w-[60px]">
          <Con d="M12 12C14 22 24 14 30 18C34 20 36 20 36 23" /><Sm x={8} y={3} /><Sm x={31} y={23} />
        </Cell>
        <Cell w="w-[60px]">
          <Con d="M17 7H33V17H18V27H32" /><Sm x={8} y={3} /><Sm x={32} y={23} />
        </Cell>
        <div className="w-[16px] h-full border-r-2 border-[#e2e2e2] flex items-end justify-center pb-[5px]">
          <div className="w-0 h-0 border-x-[4px] border-t-[7px] border-x-transparent border-t-[#333]" />
        </div>
        <Cell w="w-[57px]" last>
          <rect x={13} y={5} width={20} height={30} rx={2} fill="#d8d8d8" stroke="#666" strokeWidth={2} />
          <path d="M29 14l8 12M37 14l-8 12" stroke="#2f7fc8" strokeWidth={2.5} />
        </Cell>
      </div>
      <div className="ml-[35px] h-[42px] flex rounded-lg overflow-hidden bg-[#f8f8f8] border border-[#d8d8d8] shadow-[0_1px_0_#bbb]">
        <Cell w="w-[61px]"><path d="M16 6L36 27" stroke="#3a5a90" strokeWidth={2} /><GD x={16} y={6} /><GD x={36} y={27} /></Cell>
        <Cell w="w-[57px]"><path d="M15 5Q34 9 37 29" stroke="#5a75a5" strokeWidth={2.500} fill="none" /><GD x={15} y={5} /><GD x={37} y={29} /></Cell>
        <Cell w="w-[56px]"><path d="M18 5V14L24 18Q33 20 33 29" stroke="#6a88b5" strokeWidth={2} fill="none" /><GD x={18} y={5} /><GD x={33} y={29} /><rect x={18} y={20} width={3} height={3} fill="#0f9a1c" /><rect x={40} y={14} width={3} height={3} fill="#0f9a1c" /></Cell>
        <Cell w="w-[55px]"><path d="M11 6V30M39 6V30" stroke="#8fb0d0" strokeWidth={2} /><path d="M20 13L27 19L20 25z" fill="#bcd0e8" stroke="#7f9fc8" /><Gh x={8} y={3} /><Gh x={8} y={28} /><Gh x={36} y={3} /><Gh x={36} y={16} /><Gh x={36} y={28} /></Cell>
        <Cell w="w-[56px]" last><path d="M18 6L32 26M32 6L18 26" stroke="#a8a8a8" strokeWidth={2.500} /><path d="M6 11H18M32 11H44" stroke="#8fb0d0" strokeWidth={2} /><circle cx={16} cy={29} r={4} fill="none" stroke="#7f9fc8" strokeWidth={2} /><circle cx={33} cy={29} r={4} fill="none" stroke="#7f9fc8" strokeWidth={2} /><Gh x={3} y={8} /><Gh x={42} y={8} /></Cell>
      </div>
      <div className="ml-[47px] h-[42px] flex rounded-lg overflow-hidden bg-[#f8f8f8] border border-[#d8d8d8] shadow-[0_1px_0_#bbb]">
        <Cell w="w-[57px]"><path d="M11 22L24 8Q38 10 37 22Q35 33 24 32" stroke="#9fbcd8" strokeWidth={2.500} fill="none" /><rect x={22} y={5} width={6} height={6} fill="#e88080" /><Gh x={8} y={3} /><Gh x={38} y={3} /><Gh x={8} y={30} /><Gh x={38} y={30} /></Cell>
        <Cell w="w-[56px]"><rect x={11} y={6} width={22} height={24} fill="#dfe8f2" stroke="#8fb0d0" strokeWidth={2} /><circle cx={30} cy={24} r={9} fill="#b8cee4" stroke="#8fb8b0" /><Gh x={8} y={3} /><Gh x={36} y={3} /><Gh x={8} y={28} /><Gh x={36} y={28} /></Cell>
        <Cell w="w-[53px]" last><rect x={8} y={5} width={18} height={18} fill="#dfe8f2" stroke="#8fb0d0" strokeWidth={2} /><circle cx={27} cy={23} r={10} fill="#b8cee4" stroke="#8fb8b0" /><Gh x={6} y={3} /><Gh x={24} y={3} /><Gh x={6} y={21} /><Gh x={38} y={14} /><Gh x={38} y={30} /><Gh x={16} y={30} /></Cell>
      </div>
      <div className="ml-[48px] h-[42px] flex rounded-lg overflow-hidden bg-[#f8f8f8] border border-[#d8d8d8] shadow-[0_1px_0_#bbb]">
        <Cell w="w-[56px]"><circle cx={22} cy={15} r={9} fill="#dbe8f6" stroke="#3f6fb0" strokeWidth={2.500} /><path d="M28 22L38 33" stroke="#555" strokeWidth={3} /></Cell>
        <Cell w="w-[56px]"><path d="M15 22V10M20 18V5M25 18V4M30 18V6M35 20V11M15 22L10 17M15 22C14 30 20 36 25 36C32 36 35 30 35 20" fill="#dbe8f6" stroke="#3f6fb0" strokeWidth={2} /></Cell>
        <Cell w="w-[55px]"><circle cx={25} cy={9} r={5} fill="#8fb0d8" stroke="#3f6fb0" strokeWidth={2} /><path d="M22 14H28L30 21H20z" fill="#8fb0d8" stroke="#3f6fb0" /><rect x={12} y={21} width={26} height={12} rx={2} fill="#c8c8c8" stroke="#555" strokeWidth={2} /></Cell>
        <Cell w="w-[54px]" last><path d="M14 35L16 27L29 11L34 15L21 31z" fill="#dbe8f6" stroke="#3f6fb0" strokeWidth={1.500} /><path d="M28 9L32 4L38 9L34 14z" fill="#3f6fb0" /></Cell>
      </div>
      <svg width={33} height={38} viewBox="0 0 33 38" className="ml-[74px] mt-[3px]">
        <circle cx={13} cy={13} r={11} fill="#cfe0f4" stroke="#3f6fb0" strokeWidth={3} />
        <path d="M7 13H19" stroke="#3f6fb0" strokeWidth={4} />
        <path d="M20 21L32 35" stroke="#444" strokeWidth={4} />
      </svg>
      <div className="ml-[18px] mt-[6px] w-[182px] h-[6px] rounded-full bg-[#b9b9b9] relative">
        <div className="h-full w-[38px] rounded-l-full bg-[#4a9bf0]" />
        <div className="absolute left-[25px] top-[-9px] w-[23px] h-[24px] rounded-full bg-white border border-[#cfcfcf] shadow-sm" />
      </div>
      <svg width={33} height={38} viewBox="0 0 33 38" className="ml-[13px] mt-[3px]">
        <circle cx={13} cy={13} r={11} fill="#cfe0f4" stroke="#3f6fb0" strokeWidth={3} />
        <path d="M7 13H19M13 7V19" stroke="#3f6fb0" strokeWidth={4} />
        <path d="M20 21L32 35" stroke="#444" strokeWidth={4} />
      </svg>
    </div>
  );
}

function SectionHeader({ t, active }: { t: string; active?: boolean }) {
  return (
    <div className={`h-[34px] mb-[2px] flex items-center pl-[43px] pr-[15px] justify-between text-[25.5px] text-black border-b-2 ${active ? "bg-[linear-gradient(180deg,#84b6ee,#b9e2fd)] border-[#9fb4c8]" : "bg-[linear-gradient(180deg,#ebebeb,#ffffff_50%,#ececec)] border-[#a8a8a8]"}`}>
      <span className="mb-[3px]">{t}</span>
      <div className="w-[22px] h-[22px] rounded-full bg-[#686868] flex items-center justify-center">
        <svg width={12} height={12} viewBox="0 0 12 12">
          <path d="M1 1L11 11M11 1L1 11" stroke={active ? "#9fcdf5" : "#e0e0e0"} strokeWidth={2} />
        </svg>
      </div>
    </div>
  );
}

function Sidebar() {
  return (
    <div className="w-[463px] shrink-0 flex flex-col border-r-[3px] border-[#9c9c9c] overflow-hidden bg-[#cddae5]">
      <div className="h-[32px] shrink-0 flex bg-[linear-gradient(180deg,#e4e4e4,#fafafa_40%,#ececec)] border-b-2 border-[#a8a8a8]">
        <div className="w-[59px] flex items-center justify-center border-r-2 border-[#b8b8b8]">
          <svg width={34} height={26} viewBox="0 0 34 26" fill="none" stroke="#3f6fb0" strokeWidth={1.6}>
            <rect x={1} y={1} width={7} height={5} />
            <rect x={11} y={11} width={6} height={4} />
            <rect x={11} y={20} width={6} height={4} />
            <path d="M4 6V22H11M4 13H11" />
            <path d="M13 3H33" strokeWidth={3} />
            <path d="M22 13H33M22 22H33" strokeWidth={3} stroke="#6f90c0" />
          </svg>
        </div>
        <div className="flex-1" />
        <div className="w-[59px] flex items-center justify-center border-l-2 border-[#b8b8b8]">
          <svg width={26} height={24} viewBox="0 0 26 24" fill="none" stroke="#3f6fb0" strokeWidth={1.6}>
            <rect x={1} y={1} width={6} height={4} /><rect x={1} y={10} width={6} height={4} /><rect x={1} y={19} width={6} height={4} />
            <path d="M10 3H25M10 12H25M10 21H25" strokeWidth={2} />
          </svg>
        </div>
        <div className="w-[56px] flex items-center justify-center bg-[linear-gradient(180deg,#84b6ee,#b9e2fd)]">
          <svg width={24} height={24} viewBox="0 0 24 24" fill="none" stroke="#2d5fa8" strokeWidth={3.4}>
            <circle cx={10} cy={10} r={7} />
            <path d="M15 15L22 22" strokeWidth={4} />
          </svg>
        </div>
      </div>
      <div className="h-[66px] shrink-0 bg-[#a6a6a6] flex items-center pl-[37px] border-b border-[#8f8f8f]">
        <div className="w-[380px] h-[35px] rounded-[5px] bg-white border border-[#d0d0d0] flex items-center justify-center gap-[12px] pr-[32px]">
          <svg width={22} height={22} viewBox="0 0 22 22" fill="none" stroke="#555" strokeWidth={1.6}>
            <circle cx={9} cy={9} r={8} />
            <path d="M15 15L21 21" />
          </svg>
          <span className="text-[#bdbdbd] text-[22px] tracking-[0.8px]">Search</span>
        </div>
      </div>
      <div className="shrink-0 mt-[1px]">
        <SectionHeader t="Annotations" active />
        <SectionHeader t="Walls, shell and structure" />
        <SectionHeader t="Doors" />
      </div>
      <div className="flex-1 overflow-hidden pl-[10px] pt-[10px] grid grid-cols-[repeat(5,64px)] auto-rows-[63px] gap-x-[28px] gap-y-[21px]">
        {lib.map((n, i) => (
          <div key={i} className="w-[64px] h-[63px] border-[3px] border-t-[#7a7a7a] border-l-[#7a7a7a] border-r-[#6a6a6a] border-b-[#5f5f5f] bg-[linear-gradient(135deg,#f4f4f4,#d0d0d0_55%,#f8f8f8)] overflow-hidden">
            <svg width={58} height={57} viewBox="3 3 58 57" className="block">{n}</svg>
          </div>
        ))}
      </div>
    </div>
  );
}

function BottomBar() {
  return (
    <div className="h-[30px] shrink-0 flex items-stretch bg-[#f6f6f6] border-b-2 border-[#d6d6d6]">
      <div className="w-[34px] flex items-center justify-center bg-[linear-gradient(180deg,#f4f4f4,#d8d8d8)] border-r-2 border-[#333]">
        <div className="w-[7px] h-[18px] border-x border-[#888]" />
      </div>
      <div className="w-[91px] flex bg-[#f2f2f2]">
        <div className="flex-1 flex items-center justify-center border-r border-[#e2e2e2]">
          <div className="w-0 h-0 border-y-[9px] border-r-[11px] border-y-transparent border-r-[#c4c4c4]" />
        </div>
        <div className="flex-1 flex items-center justify-center">
          <div className="w-0 h-0 border-y-[9px] border-l-[11px] border-y-transparent border-l-[#c4c4c4]" />
        </div>
      </div>
      <div className="w-[191px] bg-white flex items-center justify-between pl-[10px] pr-[11px]">
        <span className="text-[20px] text-[#222] font-['Inter',sans-serif]">Custom 65%</span>
        <svg width={16} height={26} viewBox="0 0 16 26" fill="none" stroke="#222" strokeWidth={2}>
          <path d="M2 9L8 3L14 9M2 17L8 23L14 17" />
        </svg>
      </div>
      <div className="w-[90px] bg-[#9f9f9f] flex items-center justify-center gap-[4px]">
        {[0, 1, 2].map((i) => (
          <div key={i} className="w-[18px] h-[22px] rounded-[2px] bg-white border-b-[3px] border-[#6e6e6e]" />
        ))}
      </div>
      <div className="flex-1 flex items-center pl-[11px] pr-[8px]">
        <div className="w-full h-[16px] rounded-full bg-[#bfbfbf]" />
      </div>
      <div className="w-[29px] bg-[#dfe6f0] flex items-center justify-center">
        <svg width={26} height={24} viewBox="0 0 26 24">
          <rect x={8} y={7} width={10} height={10} fill="#a8c8ec" stroke="#3f6fb0" strokeWidth={1.5} />
          <path d="M13 1l3 3h-6zM13 23l3-3h-6zM1 12l3-3v6zM25 12l-3-3v6z" fill="#2d5fa8" />
        </svg>
      </div>
      <div className="w-[4px]" />
      <div className="w-[21px] bg-[#c6d0e0] flex items-center justify-center">
        <div className="w-[10px] h-[16px] bg-white rounded-[2px]" />
      </div>
      <div className="w-[3px]" />
    </div>
  );
}

export default function App() {
  return (
    <div className="w-[2558px] h-[1468px] overflow-hidden flex flex-col bg-[#2b3328] font-['Liberation_Sans',Arial,sans-serif]">
      <MenuBar />
      <div className="flex-1 min-h-0 flex flex-col rounded-t-[10px] rounded-b-[6px] overflow-hidden bg-[#ebebeb]">
        <TopToolbar />
        <SecondToolbar />
        <div className="h-[1194px] shrink-0 flex">
          <Sidebar />
          <div className="flex-1 min-w-0 flex flex-col">
            <div className="flex-1 min-h-0 flex">
              <div className="flex-1 min-w-0 bg-[#afbebe] pl-[157px] pt-[5px]">
                <div className="w-[1745px] h-[1151px] border-2 border-black bg-white">
                  <FloorPlan />
                </div>
              </div>
              <div className="w-[38px] shrink-0 bg-[#f5f5f5] pt-[60px] pl-[8px]">
                <div className="w-[15px] h-[1052px] rounded-full bg-[#bfbfbf]" />
              </div>
            </div>
            <BottomBar />
          </div>
        </div>
        <div className="flex-1 min-h-0 flex items-center pb-[5px] bg-[#ebebeb] text-[21px] text-[#111]">
          <span className="ml-[18px] font-['Inter',sans-serif] tracking-[0.3px]">Ready</span>
          <span className="ml-[1004px] text-[23px] font-['Liberation_Sans',sans-serif] tracking-[0.6px]">M: [ 0.32, 0.17 ]</span>
        </div>
      </div>
    </div>
  );
}
